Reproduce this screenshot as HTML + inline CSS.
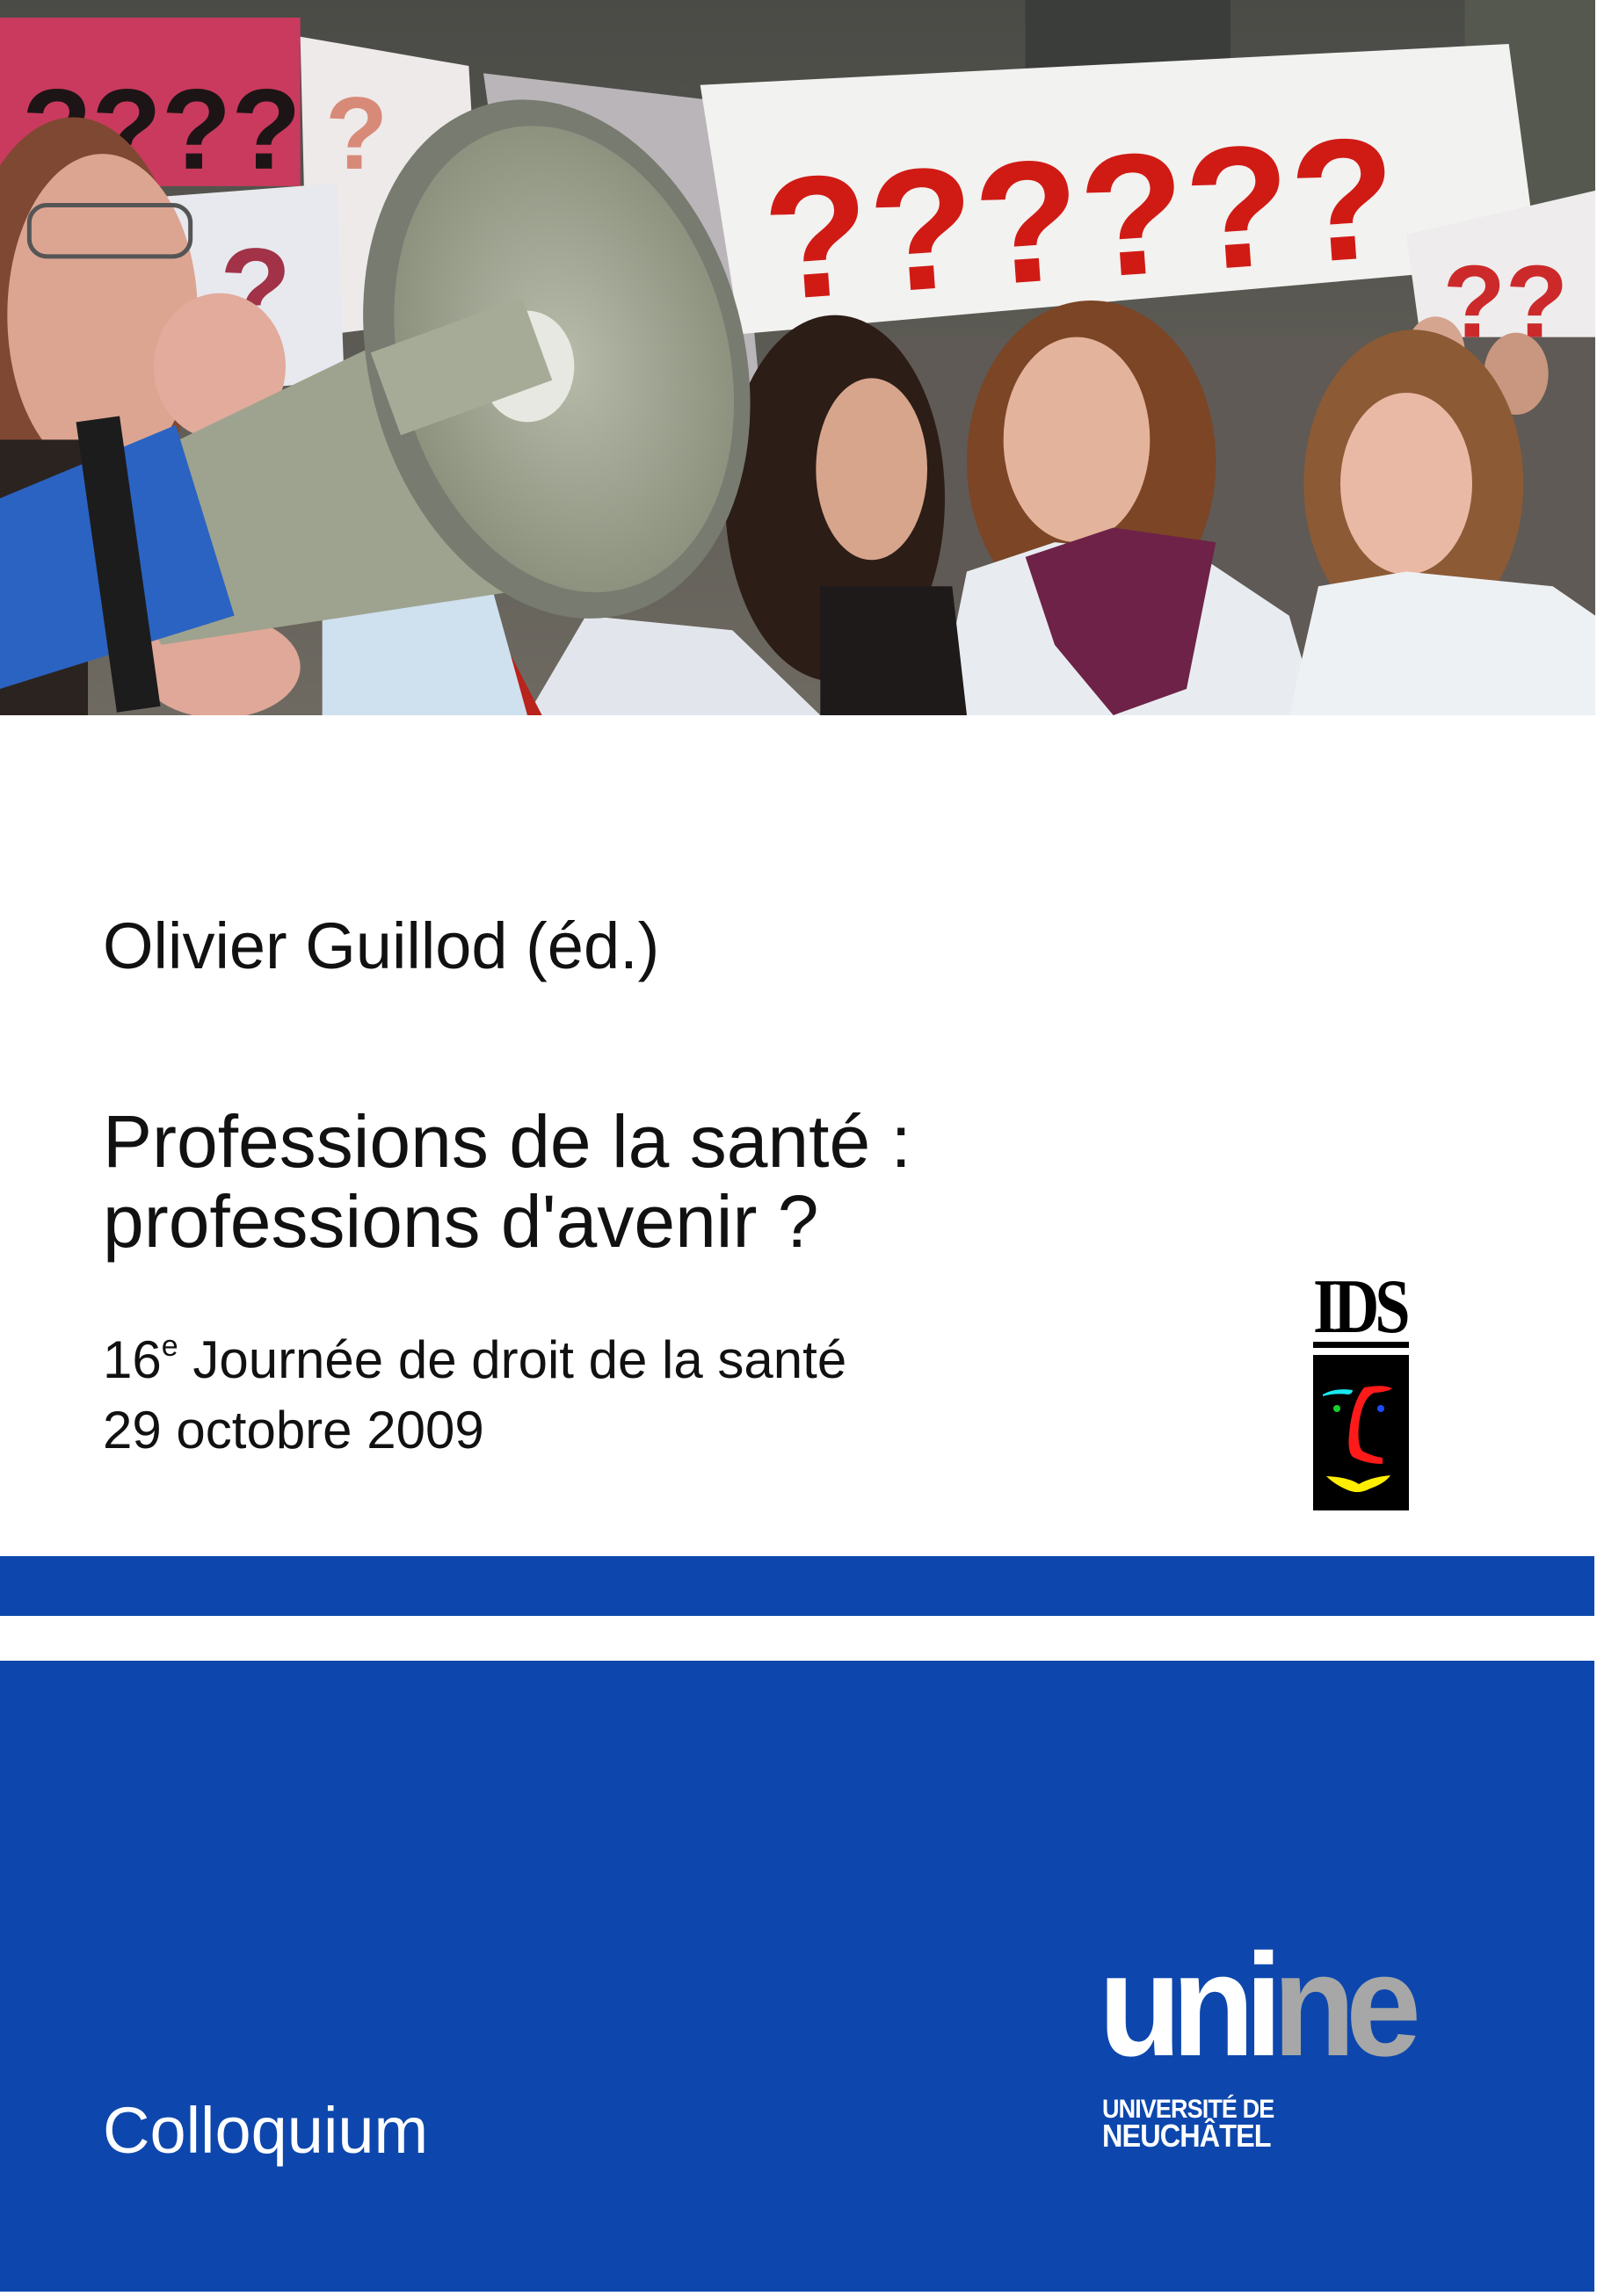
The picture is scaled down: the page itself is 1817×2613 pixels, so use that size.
<!DOCTYPE html>
<html><head><meta charset="utf-8"><style>
html,body{margin:0;padding:0;background:#fff;}
body{width:1817px;height:2613px;position:relative;overflow:hidden;font-family:"Liberation Sans",Arial,sans-serif;}
.t{position:absolute;left:117px;color:#111;white-space:nowrap;line-height:1;}
</style></head><body>
<svg style="position:absolute;left:0;top:0" width="1815" height="814" viewBox="0 0 1089 488" preserveAspectRatio="none">
<defs>
<linearGradient id="bg" x1="0" y1="0" x2="0" y2="1"><stop offset="0" stop-color="#4a4b46"/><stop offset="1" stop-color="#6e6a62"/></linearGradient>
<radialGradient id="cone" cx="0.5" cy="0.5" r="0.5"><stop offset="0" stop-color="#b7bcaa"/><stop offset="1" stop-color="#8d927f"/></radialGradient>
</defs>
<rect width="1089" height="488" fill="url(#bg)"/>
<rect x="700" y="0" width="140" height="80" fill="#3b3d3a"/>
<rect x="1000" y="0" width="89" height="160" fill="#55584f"/>
<rect x="0" y="12" width="205" height="115" fill="#c93a5e"/>
<text x="15" y="115" font-family="Liberation Sans" font-weight="bold" font-size="78" fill="#1d1416">????</text>
<polygon points="205,25 320,45 330,215 210,230" fill="#eeeaea"/>
<text x="222" y="115" font-weight="bold" font-size="70" fill="#d88a78">?</text>
<polygon points="100,135 230,125 235,260 110,270" fill="#e8e9ee"/>
<text x="150" y="225" font-weight="bold" font-size="80" fill="#a13248">?</text>
<polygon points="330,50 500,70 520,280 360,260" fill="#b9b5b8"/>
<polygon points="478,58 1030,30 1050,180 505,228" fill="#f2f2f0"/>
<text x="520" y="188" font-weight="bold" font-size="118" fill="#d01b15" transform="rotate(-4 760 130)">??????</text>
<polygon points="960,160 1089,130 1089,260 975,270" fill="#eeecec"/>
<text x="985" y="230" font-weight="bold" font-size="70" fill="#cc2a2a">??</text>
<rect x="600" y="230" width="489" height="258" fill="#5f5a55"/>
<ellipse cx="980" cy="240" rx="20" ry="24" fill="#d6a58f"/>
<ellipse cx="1035" cy="255" rx="22" ry="28" fill="#c99680"/>
<ellipse cx="570" cy="340" rx="75" ry="125" fill="#2c1d17"/>
<ellipse cx="595" cy="320" rx="38" ry="62" fill="#d7a58c"/>
<ellipse cx="745" cy="315" rx="85" ry="110" fill="#7b4526"/>
<ellipse cx="735" cy="300" rx="50" ry="70" fill="#e4b39b"/>
<ellipse cx="965" cy="330" rx="75" ry="105" fill="#8c5a35"/>
<ellipse cx="960" cy="330" rx="45" ry="62" fill="#eab9a5"/>
<path d="M360,488 L400,420 L500,430 L560,488 Z" fill="#e2e6ec"/>
<path d="M640,488 L660,390 L720,370 L820,380 L880,420 L900,488 Z" fill="#e8ecf0"/>
<path d="M700,380 L760,360 L830,370 L810,470 L760,488 L720,440 Z" fill="#6e2248"/>
<path d="M880,488 L900,400 L960,390 L1060,400 L1089,420 L1089,488 Z" fill="#eef1f3"/>
<path d="M560,400 L650,400 L660,488 L560,488 Z" fill="#1e1a1a"/>
<path d="M270,488 L290,440 L340,430 L370,488 Z" fill="#b8231c"/>
<path d="M220,400 L330,380 L360,488 L220,488 Z" fill="#cfe0ee"/>
<ellipse cx="50" cy="230" rx="80" ry="150" fill="#7f4832"/>
<ellipse cx="70" cy="215" rx="65" ry="110" fill="#dca592"/>
<rect x="20" y="140" width="110" height="35" rx="12" fill="none" stroke="#555" stroke-width="3"/>
<rect x="0" y="300" width="60" height="188" fill="#2a2320"/>
<ellipse cx="150" cy="250" rx="45" ry="50" fill="#e2ab9c"/>
<ellipse cx="150" cy="455" rx="55" ry="35" fill="#e0a898"/>
<polygon points="60,330 330,200 440,390 110,440" fill="#9ea38f"/>
<path d="M0,340 L120,290 L160,420 L0,470 Z" fill="#2b63c2"/>
<rect x="65" y="285" width="30" height="200" fill="#1c1c1c" transform="rotate(-8 80 380)"/>
<ellipse cx="380" cy="245" rx="128" ry="180" transform="rotate(-15 380 245)" fill="#777b70"/>
<ellipse cx="385" cy="245" rx="112" ry="162" transform="rotate(-15 385 245)" fill="url(#cone)"/>
<ellipse cx="360" cy="250" rx="32" ry="38" fill="#e8e8e2"/>
<rect x="260" y="220" width="110" height="60" fill="#a6ab98" transform="rotate(-20 315 250)"/>
</svg>

<div class="t" style="top:1040px;font-size:74px;">Olivier Guillod (éd.)</div>
<div class="t" style="top:1257px;font-size:84px;">Professions de la santé :</div>
<div class="t" style="top:1348px;font-size:84px;">professions d'avenir ?</div>
<div class="t" style="top:1518px;font-size:60px;">16<sup style="font-size:34px;vertical-align:25px;line-height:0">e</sup> Journée de droit de la santé</div>
<div class="t" style="top:1598px;font-size:60px;">29 octobre 2009</div>

<div style="position:absolute;left:1494px;top:1450px;width:110px;height:76px;font-family:'Liberation Serif',serif;font-weight:bold;font-size:88px;line-height:76px;letter-spacing:-6px;transform:scaleX(0.82);transform-origin:left;color:#000;">IDS</div>
<div style="position:absolute;left:1494px;top:1527px;width:109px;height:7px;background:#000"></div>
<svg style="position:absolute;left:1494px;top:1542px" width="109" height="177" viewBox="0 0 109 177">
<rect width="109" height="177" fill="#000"/>
<path d="M11,45 Q25,37 45,40 Q45,44 40,45 Q25,43 11,47 Z" fill="#19e8f0"/>
<circle cx="27" cy="61" r="4" fill="#18d02a"/>
<circle cx="77" cy="61" r="4" fill="#1a4cff"/>
<path d="M58,37 Q80,33 90,38 Q85,42 70,43 Q56,48 52,80 Q50,105 57,110 Q70,116 79,117 L79,124 Q60,124 45,116 Q39,110 41,90 Q44,55 58,37 Z" fill="#ff1a1a"/>
<path d="M15,138 Q40,139 52,147 Q66,139 88,137 Q82,146 65,152 Q52,159 40,154 Q25,148 15,138 Z" fill="#ffee00"/>
</svg>

<div style="position:absolute;left:0;top:1771px;width:1814px;height:68px;background:#0d47ad"></div>
<div style="position:absolute;left:0;top:1890px;width:1814px;height:718px;background:#0d47ad"></div>

<div class="t" style="top:2388px;font-size:74px;color:#fff;">Colloquium</div>

<div style="position:absolute;left:1250px;top:2200px;font-weight:bold;font-size:166px;line-height:1;letter-spacing:-12px;white-space:nowrap;transform:scaleX(0.93);transform-origin:left;"><span style="color:#fff">uni</span><span style="color:#a7a7a7">ne</span></div>
<div style="position:absolute;left:1254px;top:2386px;color:#fff;font-weight:bold;font-size:30px;line-height:30px;letter-spacing:-1px;white-space:nowrap;transform:scaleX(0.9);transform-origin:left;">UNIVERSITÉ DE<br><span style="font-size:36px">NEUCHÂTEL</span></div>
</body></html>
